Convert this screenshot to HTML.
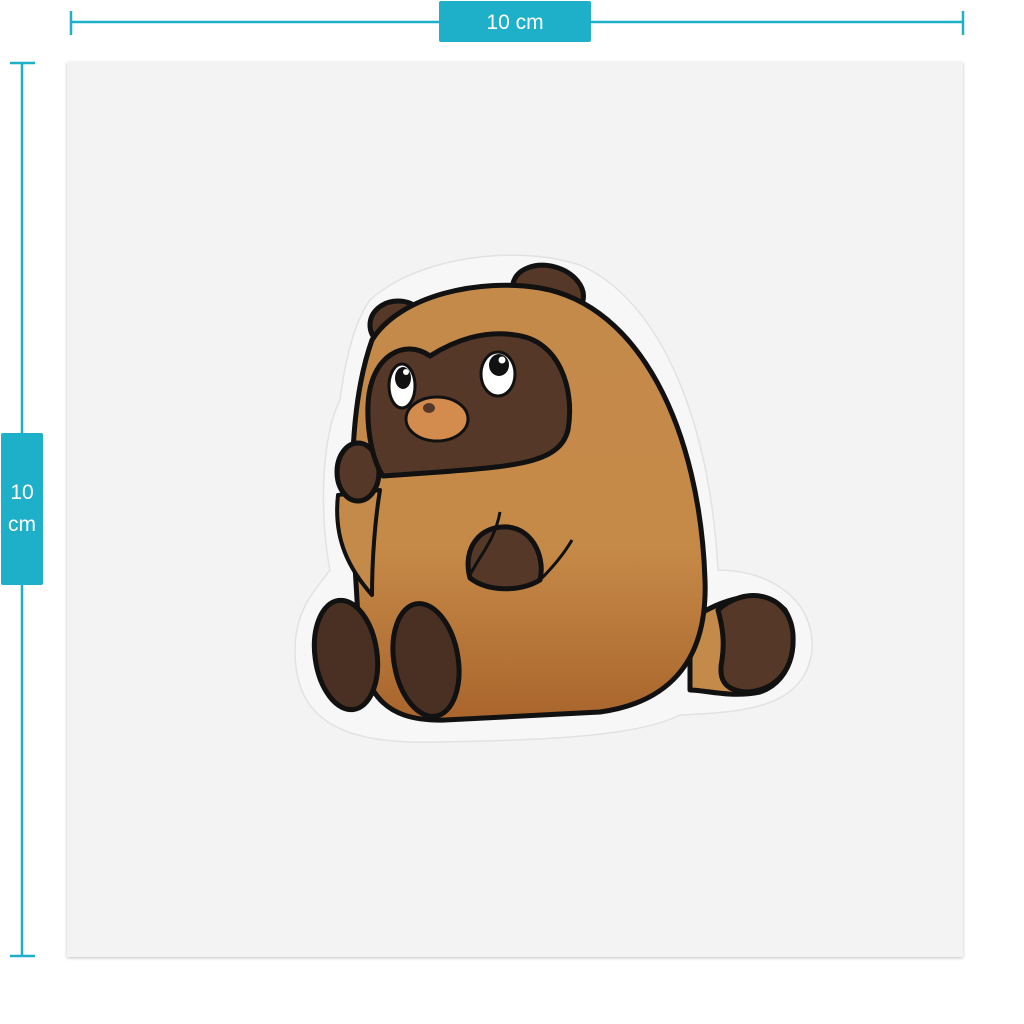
<!DOCTYPE html>
<html><head><style>
html,body{margin:0;padding:0;background:#fff;width:1024px;height:1024px;overflow:hidden;font-family:"Liberation Sans",sans-serif}
.card{position:absolute;left:67px;top:62px;width:896px;height:895px;background:#f3f3f3;box-shadow:0 1px 3px rgba(0,0,0,.25)}
.lbl{position:absolute;background:#1eb0c9;color:#fff;font-size:21px;text-align:center;border-radius:2px}
</style></head><body>
<div class="card"></div>
<svg width="1024" height="1024" style="position:absolute;left:0;top:0">
<g stroke="#1eb0c9" stroke-width="2.5">
<line x1="71" y1="22" x2="963" y2="22"/><line x1="71" y1="11" x2="71" y2="35"/><line x1="963" y1="11" x2="963" y2="35"/>
<line x1="22" y1="63" x2="22" y2="956"/><line x1="10" y1="63" x2="35" y2="63"/><line x1="10" y1="956" x2="35" y2="956"/>
</g>
<defs><linearGradient id="g" x1="0" y1="0" x2="0" y2="1"><stop offset="0" stop-color="#c48a4a"/><stop offset=".6" stop-color="#c68a48"/><stop offset="1" stop-color="#a9652c"/></linearGradient></defs>
<path d="M370,300 C420,255 520,245 580,265 C660,300 710,420 718,570 C770,570 815,600 812,650 C805,710 740,712 680,715 C640,735 560,740 440,742 C340,745 295,720 295,650 C295,610 315,590 330,570 C320,520 320,440 340,400 C345,360 355,320 370,300 Z" fill="#f7f7f7" stroke="#e2e2e2" stroke-width="1.5"/>
<g stroke="#111" stroke-width="5" stroke-linejoin="round">
<path d="M690,620 C720,600 760,585 785,610 C800,635 795,680 760,692 C730,698 705,690 690,690 Z" fill="#c48a4a"/>
<path d="M718,610 C745,585 790,592 793,635 C795,675 770,692 745,692 C725,690 718,680 722,660 C725,640 722,625 718,610 Z" fill="#553827"/>
<ellipse cx="398" cy="325" rx="28" ry="24" fill="#553827"/>
<ellipse cx="548" cy="292" rx="36" ry="26" transform="rotate(15 548 292)" fill="#553827"/>
<path d="M372,340 C400,295 480,278 540,288 C640,305 700,430 705,580 C708,665 665,703 600,712 L445,720 C380,722 360,690 358,620 C356,560 340,430 372,340 Z" fill="url(#g)"/>
<path d="M338,495 C333,540 350,570 372,595 C372,560 375,520 380,490 Z" fill="#c48a4a" stroke-width="4"/>
<ellipse cx="358" cy="472" rx="21" ry="29" fill="#553827"/>
<path d="M368,405 C370,355 405,338 430,356 C455,340 485,330 515,335 C560,340 575,390 568,430 C560,462 520,466 440,472 L383,476 C372,460 367,430 368,405 Z" fill="#553827"/>
<ellipse cx="346" cy="655" rx="31" ry="55" transform="rotate(-8 346 655)" fill="#4a3022"/>
<ellipse cx="426" cy="660" rx="32" ry="57" transform="rotate(-10 426 660)" fill="#4a3022"/>
<path d="M470,578 C462,548 480,525 508,527 C535,530 545,560 540,580 C520,592 488,592 470,578 Z" fill="#553827"/>
</g>
<path d="M500,512 C495,540 480,555 470,575 M540,580 C555,565 565,552 572,540" stroke="#111" stroke-width="3" fill="none"/>
<g stroke="#111" stroke-width="3">
<ellipse cx="402" cy="386" rx="13" ry="22" fill="#fff"/>
<ellipse cx="498" cy="374" rx="17" ry="22" fill="#fff"/>
</g>
<ellipse cx="403" cy="378" rx="8" ry="11" fill="#111"/><circle cx="406" cy="372" r="3" fill="#fff"/>
<ellipse cx="499" cy="365" rx="10" ry="11" fill="#111"/><circle cx="502" cy="360" r="3.5" fill="#fff"/>
<ellipse cx="437" cy="419" rx="31" ry="22" fill="#d38c4e" stroke="#111" stroke-width="3"/>
<ellipse cx="429" cy="408" rx="6" ry="5" fill="#553827"/>
</svg>
<div class="lbl" style="left:439px;top:1px;width:152px;height:41px;line-height:43px">10 cm</div>
<div class="lbl" style="left:1px;top:433px;width:42px;height:152px;line-height:32px;padding-top:44px;box-sizing:border-box">10<br>cm</div>
</body></html>
